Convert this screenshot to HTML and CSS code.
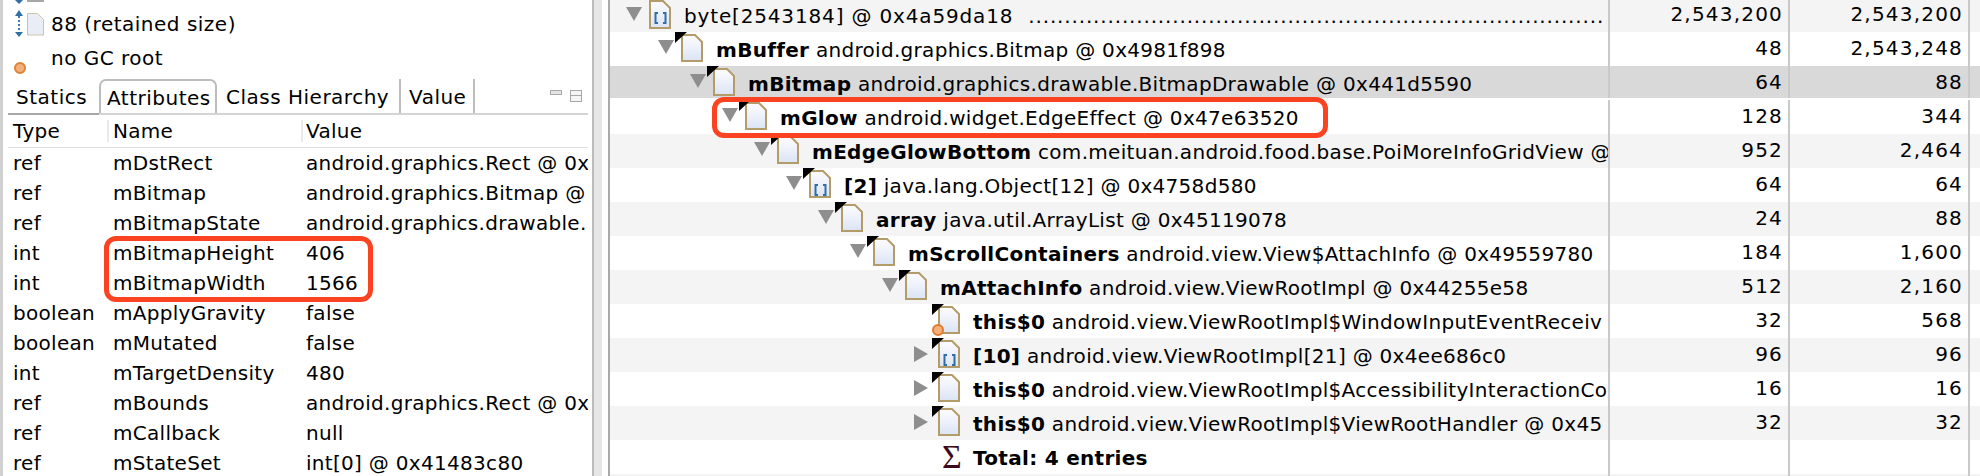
FILE: index.html
```html
<!DOCTYPE html>
<html>
<head>
<meta charset="utf-8">
<title>Heap inspector</title>
<link rel="stylesheet" href="styles.css">
</head>
<body>
<div class="app">
  <section class="left">
    <div class="info">
      <div class="info-cut">
        <svg class="ic-cut" width="32" height="7" viewBox="0 0 32 7"><path d="M3 0l4 4 4-4z" fill="#2f6fa8"/><rect x="15" y="-5" width="17" height="7" fill="#a8a8a8"/></svg>
      </div>
      <div class="info-row">
        <svg class="ic" width="32" height="34" viewBox="0 0 32 34"><path d="M7 9v16" stroke="#3a78b0" stroke-width="2" stroke-dasharray="2 2"/><path d="M3 9l4-6 4 6z M3 25l4 5 4-5z" fill="#2f6fa8"/><path d="M15.500 6.500h10l6 6v15.500h-16z" fill="#e8edf6" stroke="#cdc3a8"/></svg>
        <span>88 (retained size)</span>
      </div>
      <div class="info-row">
        <svg class="ic" width="32" height="34" viewBox="0 0 32 34"><circle cx="8" cy="27" r="5" fill="#f4b07a" stroke="#df8238" stroke-width="2"/></svg>
        <span>no GC root</span>
      </div>
    </div>
    <div class="tabs">
      <div class="tab t-statics">Statics</div>
      <div class="tab t-attr">Attributes</div>
      <div class="tab t-class">Class Hierarchy</div>
      <div class="tab t-value">Value</div>
      <div class="tab-tools">
        <svg width="32" height="12" viewBox="0 0 32 12"><rect x="0.500" y="0.500" width="11" height="4" fill="#e4e4e4" stroke="#a8a8a8"/><rect x="20.500" y="0.500" width="11" height="11" fill="#f4f4f4" stroke="#a8a8a8"/><path d="M20 5.500h12" stroke="#a8a8a8"/></svg>
      </div>
    </div>
    <div class="attr-head">
      <div class="ah ah-type">Type</div><div class="ah ah-name">Name</div><div class="ah ah-value">Value</div>
    </div>
    <div class="attrs">
      <div class="attr"><span class="type">ref</span><span class="name">mDstRect</span><span class="value">android.graphics.Rect @ 0x</span></div>
      <div class="attr"><span class="type">ref</span><span class="name">mBitmap</span><span class="value">android.graphics.Bitmap @</span></div>
      <div class="attr"><span class="type">ref</span><span class="name">mBitmapState</span><span class="value">android.graphics.drawable.</span></div>
      <div class="attr"><span class="type">int</span><span class="name">mBitmapHeight</span><span class="value">406</span></div>
      <div class="attr"><span class="type">int</span><span class="name">mBitmapWidth</span><span class="value">1566</span></div>
      <div class="attr"><span class="type">boolean</span><span class="name">mApplyGravity</span><span class="value">false</span></div>
      <div class="attr"><span class="type">boolean</span><span class="name">mMutated</span><span class="value">false</span></div>
      <div class="attr"><span class="type">int</span><span class="name">mTargetDensity</span><span class="value">480</span></div>
      <div class="attr"><span class="type">ref</span><span class="name">mBounds</span><span class="value">android.graphics.Rect @ 0x</span></div>
      <div class="attr"><span class="type">ref</span><span class="name">mCallback</span><span class="value">null</span></div>
      <div class="attr"><span class="type">ref</span><span class="name">mStateSet</span><span class="value">int[0] @ 0x41483c80</span></div>
      <div class="redbox attr-mark"></div>
    </div>
  </section>
  <div class="sash"></div>
  <section class="right">
    <div class="tree">
      <div class="row z first"><div class="cell-name d0"><i class="tw open"></i><svg class="doc" width="28" height="34"><use href="#arr"/></svg><span class="txt">byte[2543184] @ 0x4a59da18</span><span class="dots">................................................................................</span></div><div class="num">2,543,200</div><div class="num">2,543,200</div></div>
      <div class="row"><div class="cell-name d1"><i class="tw open"></i><svg class="doc" width="28" height="34"><use href="#ref"/></svg><span class="txt"><b>mBuffer</b> android.graphics.Bitmap @ 0x4981f898</span></div><div class="num">48</div><div class="num">2,543,248</div></div>
      <div class="row sel"><div class="cell-name d2"><i class="tw open"></i><svg class="doc" width="28" height="34"><use href="#ref"/></svg><span class="txt"><b>mBitmap</b> android.graphics.drawable.BitmapDrawable @ 0x441d5590</span></div><div class="num">64</div><div class="num">88</div></div>
      <div class="row"><div class="cell-name d3"><i class="tw open"></i><svg class="doc" width="28" height="34"><use href="#ref"/></svg><span class="txt"><b>mGlow</b> android.widget.EdgeEffect @ 0x47e63520</span></div><div class="num">128</div><div class="num">344</div></div>
      <div class="row z"><div class="cell-name d4"><i class="tw open"></i><svg class="doc" width="28" height="34"><use href="#ref"/></svg><span class="txt"><b>mEdgeGlowBottom</b> com.meituan.android.food.base.PoiMoreInfoGridView @</span></div><div class="num">952</div><div class="num">2,464</div></div>
      <div class="row"><div class="cell-name d5"><i class="tw open"></i><svg class="doc" width="28" height="34"><use href="#refarr"/></svg><span class="txt"><b>[2]</b> java.lang.Object[12] @ 0x4758d580</span></div><div class="num">64</div><div class="num">64</div></div>
      <div class="row z"><div class="cell-name d6"><i class="tw open"></i><svg class="doc" width="28" height="34"><use href="#ref"/></svg><span class="txt"><b>array</b> java.util.ArrayList @ 0x45119078</span></div><div class="num">24</div><div class="num">88</div></div>
      <div class="row"><div class="cell-name d7"><i class="tw open"></i><svg class="doc" width="28" height="34"><use href="#ref"/></svg><span class="txt"><b>mScrollContainers</b> android.view.View$AttachInfo @ 0x49559780</span></div><div class="num">184</div><div class="num">1,600</div></div>
      <div class="row z"><div class="cell-name d8"><i class="tw open"></i><svg class="doc" width="28" height="34"><use href="#ref"/></svg><span class="txt"><b>mAttachInfo</b> android.view.ViewRootImpl @ 0x44255e58</span></div><div class="num">512</div><div class="num">2,160</div></div>
      <div class="row"><div class="cell-name d9"><i class="tw"></i><svg class="doc" width="28" height="34"><use href="#refgc"/></svg><span class="txt"><b>this$0</b> android.view.ViewRootImpl$WindowInputEventReceiv</span></div><div class="num">32</div><div class="num">568</div></div>
      <div class="row z"><div class="cell-name d9"><i class="tw closed"></i><svg class="doc" width="28" height="34"><use href="#refarr"/></svg><span class="txt"><b>[10]</b> android.view.ViewRootImpl[21] @ 0x4ee686c0</span></div><div class="num">96</div><div class="num">96</div></div>
      <div class="row"><div class="cell-name d9"><i class="tw closed"></i><svg class="doc" width="28" height="34"><use href="#ref"/></svg><span class="txt"><b>this$0</b> android.view.ViewRootImpl$AccessibilityInteractionCo</span></div><div class="num">16</div><div class="num">16</div></div>
      <div class="row z"><div class="cell-name d9"><i class="tw closed"></i><svg class="doc" width="28" height="34"><use href="#ref"/></svg><span class="txt"><b>this$0</b> android.view.ViewRootImpl$ViewRootHandler @ 0x45</span></div><div class="num">32</div><div class="num">32</div></div>
      <div class="row"><div class="cell-name d9"><i class="tw"></i><span class="sigma">Σ</span><span class="txt"><b>Total: 4 entries</b></span></div><div class="num"></div><div class="num"></div></div>
      <div class="row z"><div class="cell-name"></div><div class="num"></div><div class="num"></div></div>
    </div>
    <div class="redbox glow-mark"></div>
  </section>
</div>
<svg class="defs" width="0" height="0">
  <defs>
    <linearGradient id="pg" x1="0" y1="0" x2="0" y2="1"><stop offset="0" stop-color="#fdfdff"/><stop offset="1" stop-color="#dbe4f4"/></linearGradient>
    <path id="page" d="M7 3h13l7 7v19h-20z" fill="url(#pg)" stroke="#b49c6a" stroke-width="2"/>
    <g id="ref"><use href="#page"/><path d="M0 0h12l-12 11z" fill="#000"/></g>
    <g id="refarr"><use href="#page"/><path d="M0 0h12l-12 11z" fill="#000"/><path d="M15 17h-2.500v10h2.500M20 17h2.500v10h-2.500" fill="none" stroke="#2f6fa8" stroke-width="2"/></g>
    <g id="arr"><path d="M7 3h13l7 7v20h-20z" fill="url(#pg)" stroke="#b49c6a" stroke-width="2"/><path d="M15 15h-2.500v10h2.500M20 15h2.500v10h-2.500" fill="none" stroke="#2f6fa8" stroke-width="2"/></g>
    <g id="refgc"><use href="#page"/><path d="M0 0h12l-12 11z" fill="#000"/><circle cx="6" cy="26" r="5" fill="#f4b07a" stroke="#df7c30" stroke-width="2"/></g>
  </defs>
</svg>
</body>
</html>
```
FILE: styles.css
```css
html, body {
  margin: 0;
  padding: 0;
  background: #fff;
  height: 100%;
  overflow: hidden;
}
body {
  font-family: "DejaVu Sans", sans-serif;
  font-size: 20px;
  color: #000;
}
.defs { position: absolute; }
.app {
  display: flex;
  height: 476px;
  overflow: hidden;
}

/* left panel */
.left {
  width: 592px;
  flex: none;
  box-sizing: border-box;
  padding: 0 4px 0 5px;
  border-left: 3px solid #d0d0d0;
  overflow: hidden;
}
.info { height: 79px; margin-left: 4px; letter-spacing: 0.5px; }
.info-cut { height: 7px; }
.ic-cut { display: block; }
.info-row { display: flex; height: 34px; line-height: 34px; gap: 7px; }
.ic { flex: none; }
.tabs {
  display: flex;
  height: 36px;
  box-sizing: border-box;
  border-bottom: 2px solid #d4d4d4;
  letter-spacing: 0.5px;
}
.tab {
  flex: none;
  box-sizing: border-box;
  line-height: 36px;
  height: 34px;
  white-space: nowrap;
}
.t-statics { width: 91px; padding-left: 8px; height: 36px; border-bottom: 2px solid #a8a8a8; }
.t-attr {
  width: 118px;
  padding-left: 6px;
  line-height: 34px;
  border: 2px solid #bdbdbd;
  border-bottom: 0;
  border-radius: 7px 7px 0 0;
}
.t-class { width: 184px; padding-left: 9px; border-right: 2px solid #bdbdbd; }
.t-value { width: 74px; padding-left: 8px; border-right: 2px solid #bdbdbd; }
.tab-tools { margin-left: auto; padding: 4px 6px 0 0; }
.attr-head {
  display: flex;
  height: 33px;
  box-sizing: border-box;
  align-items: center;
  border-bottom: 1px solid #ddd;
  letter-spacing: 0.3px;
}
.ah { height: 22px; line-height: 22px; flex: none; box-sizing: border-box; }
.ah-type { width: 99px; padding-left: 5px; }
.ah-name { width: 194px; padding-left: 4px; border-left: 2px solid #eaeaea; }
.ah-value { padding-left: 3px; border-left: 2px solid #eaeaea; }
.attrs { position: relative; overflow: hidden; letter-spacing: 0.3px; }
.attr {
  display: flex;
  height: 30px;
  line-height: 30px;
  white-space: nowrap;
  overflow: hidden;
}
.type { width: 105px; padding-left: 5px; box-sizing: border-box; flex: none; }
.name { width: 193px; flex: none; }
.value { overflow: hidden; flex: 1; min-width: 0; }
.redbox {
  position: absolute;
  border: 5px solid #fb4322;
  border-radius: 12px;
  box-sizing: border-box;
}
.attr-mark { left: 96px; top: 88px; width: 269px; height: 66px; }

/* sash */
.sash {
  flex: none;
  width: 10px;
  background: #e6e6e6;
  border-left: 2px solid #bcbcbc;
  box-sizing: border-box;
}

/* right panel */
.right {
  position: relative;
  flex: 1;
  min-width: 0;
  padding-left: 6px;
}
.tree {
  margin-top: -2px;
  border-left: 2px solid #a9a9a9;
  height: 480px;
  overflow: hidden;
}
.row {
  display: grid;
  grid-template-columns: 1000px 180px 180px;
  height: 34px;
}
.row.z { background: #f4f4f4; }
.row.sel { height: 32px; margin-bottom: 2px; background: #d9d9d9; }
.cell-name {
  display: flex;
  align-items: flex-start;
  white-space: nowrap;
  overflow: hidden;
  box-sizing: border-box;
  letter-spacing: 0.3px;
  border-right: 2px solid #c9c9c9;
}
.first .cell-name { letter-spacing: 0.84px; }
.d0 { padding-left: 16px; }
.d1 { padding-left: 48px; }
.d2 { padding-left: 80px; }
.d3 { padding-left: 112px; }
.d4 { padding-left: 144px; }
.d5 { padding-left: 176px; }
.d6 { padding-left: 208px; }
.d7 { padding-left: 240px; }
.d8 { padding-left: 272px; }
.d9 { padding-left: 304px; }
.tw { display: block; flex: none; width: 18px; }
.tw.open {
  width: 0;
  height: 0;
  margin: 8px 1px 0 0;
  border-left: 8.5px solid transparent;
  border-right: 8.5px solid transparent;
  border-top: 14px solid #8e8e8e;
}
.first .tw.open { margin-top: 9px; }
.tw.closed {
  width: 0;
  height: 0;
  margin: 8px 4px 0 0;
  border-top: 8px solid transparent;
  border-bottom: 8px solid transparent;
  border-left: 14px solid #8e8e8e;
}
.doc { flex: none; }
.txt { margin-left: 13px; flex: none; line-height: 36px; }
.dots { flex: 1; overflow: hidden; margin-left: 15px; min-width: 0; line-height: 36px; }
.sigma {
  width: 28px;
  box-sizing: border-box;
  padding-left: 10px;
  flex: none;
  color: #3b0a1e;
  font-family: "Liberation Serif", serif;
  font-size: 34px;
  line-height: 34px;
}
.num {
  text-align: right;
  box-sizing: border-box;
  padding-right: 5px;
  line-height: 32px;
  letter-spacing: 1.2px;
  border-right: 2px solid #c9c9c9;
}
.glow-mark { left: 110px; top: 97px; width: 616px; height: 41px; }
```
